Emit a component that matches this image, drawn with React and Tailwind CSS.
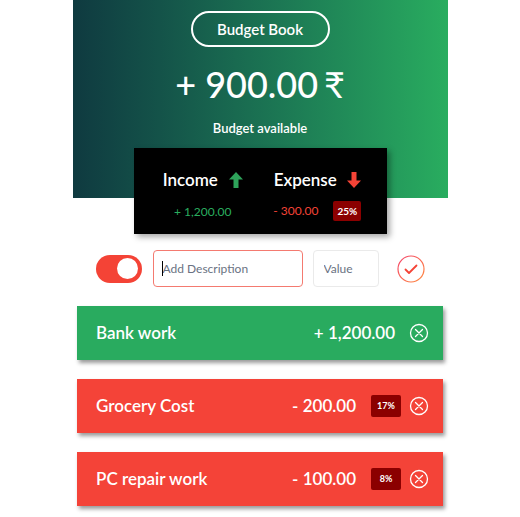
import React from 'react';

const font = { fontFamily: '"Lato", "Noto Sans", sans-serif' };

const ArrowUp = ({ color }) => (
  <svg width="14" height="16" viewBox="0 0 14 16">
    <path d="M7 0 L14 7.5 L9.5 7.5 L9.5 16 L4.5 16 L4.5 7.5 L0 7.5 Z" fill={color} />
  </svg>
);

const ArrowDown = ({ color }) => (
  <svg width="14" height="16" viewBox="0 0 14 16">
    <path d="M7 16 L14 8.5 L9.5 8.5 L9.5 0 L4.5 0 L4.5 8.5 L0 8.5 Z" fill={color} />
  </svg>
);

const CloseCircle = () => (
  <svg width="20" height="20" viewBox="0 0 20 20" fill="none" stroke="white" strokeWidth="1.3">
    <circle cx="10" cy="10" r="8.5" />
    <path d="M6.5 6.5 L13.5 13.5 M13.5 6.5 L6.5 13.5" strokeLinecap="round" />
  </svg>
);

const items = [
  { name: 'Bank work', amount: '+ 1,200.00', type: 'inc' },
  { name: 'Grocery Cost', amount: '- 200.00', type: 'exp', pct: '17%' },
  { name: 'PC repair work', amount: '- 100.00', type: 'exp', pct: '8%' },
];

export default function App() {
  return (
    <div className="min-h-screen w-full bg-white" style={font}>
      <div className="mx-auto w-[375px]">
        {/* header */}
        <div className="h-[198px] bg-gradient-to-r from-[#0f3a40] to-[#29ad5f] flex flex-col items-center pt-[11px]">
          <div className="w-[139px] h-[36px] rounded-full border-2 border-white flex items-center justify-center text-white text-[15px] font-semibold">
            Budget Book
          </div>
          <div className="mt-[14px] text-white text-[36px] font-medium leading-[46px] flex items-center gap-[6px]">
            <span>+ 900.00</span>
            <span className="font-normal">₹</span>
          </div>
          <div className="mt-[12px] text-white text-[13px] font-semibold">Budget available</div>
        </div>

        {/* summary */}
        <div className="mx-auto -mt-[50px] w-[253px] h-[86px] bg-black shadow-[3px_3px_6px_rgba(0,0,0,0.35)] flex">
          <div className="flex-1 flex flex-col items-center pl-[12px] pt-[22px]">
            <div className="flex items-center gap-[11px] text-white text-[17px] font-semibold leading-[20px]">
              <span>Income</span>
              <ArrowUp color="#2ea35a" />
            </div>
            <div className="mt-[14px] text-[#2aad5f] text-[12px] leading-[16px]">+ 1,200.00</div>
          </div>
          <div className="flex-1 flex flex-col items-center pr-[12px] pt-[22px]">
            <div className="flex items-center gap-[10px] text-white text-[17px] font-semibold leading-[20px]">
              <span>Expense</span>
              <ArrowDown color="#f44336" />
            </div>
            <div className="mt-[11px] flex items-center gap-[15px]">
              <span className="text-[#f44336] text-[12px] leading-[16px]">- 300.00</span>
              <span className="bg-[#8b0000] rounded-[2px] text-white text-[10px] font-bold px-[4px] h-[20px] flex items-center">25%</span>
            </div>
          </div>
        </div>

        {/* form */}
        <div className="mt-[16px] flex items-center justify-center">
          <div className="w-[46px] h-[28px] rounded-full bg-[#f44336] flex items-center justify-end pr-[4px]">
            <div className="w-[21px] h-[21px] rounded-full bg-white" />
          </div>
          <div className="relative ml-[11px]">
            <input
              className="w-[150px] h-[37px] rounded-[4px] border border-[#f47a70] px-[9px] text-[12px] text-gray-700 placeholder:text-gray-500 outline-none"
              placeholder="Add Description"
              style={font}
            />
            <span className="absolute left-[9px] top-[11px] w-[1px] h-[15px] bg-black" />
          </div>
          <input
            className="ml-[10px] w-[66px] h-[37px] rounded-[4px] border border-[#eaeaea] px-[10px] text-[12px] placeholder:text-gray-500 outline-none"
            placeholder="Value"
            style={font}
          />
          <svg className="ml-[18px]" width="28" height="28" viewBox="0 0 28 28" fill="none">
            <defs>
              <linearGradient id="chk" x1="0" y1="0" x2="1" y2="1">
                <stop offset="0" stopColor="#f4436b" />
                <stop offset="1" stopColor="#ff8a3d" />
              </linearGradient>
            </defs>
            <circle cx="14" cy="14" r="13" stroke="url(#chk)" strokeWidth="1.2" />
            <path d="M8.5 14.5 L12 18 L19.5 10.5" stroke="#f44336" strokeWidth="1.8" strokeLinecap="round" strokeLinejoin="round" />
          </svg>
        </div>

        {/* list */}
        <div className="mt-[19px] flex flex-col gap-[19px] items-center">
          {items.map((it) => (
            <div
              key={it.name}
              className={`w-[366px] h-[54px] flex items-center pl-[19px] pr-[14px] text-white shadow-[2px_3px_4px_rgba(0,0,0,0.4)] ${
                it.type === 'inc' ? 'bg-[#29ab5f]' : 'bg-[#f44338]'
              }`}
            >
              <span className="flex-1 text-[17px] font-semibold">{it.name}</span>
              <span className="text-[17px] font-semibold">{it.amount}</span>
              {it.pct && (
                <span className="ml-[15px] bg-[#8b0000] rounded-[2px] text-white text-[9px] font-bold w-[30px] h-[22px] flex items-center justify-center">
                  {it.pct}
                </span>
              )}
              <span className={it.pct ? 'ml-[8px]' : 'ml-[14px]'}>
                <CloseCircle />
              </span>
            </div>
          ))}
        </div>
      </div>
    </div>
  );
}
